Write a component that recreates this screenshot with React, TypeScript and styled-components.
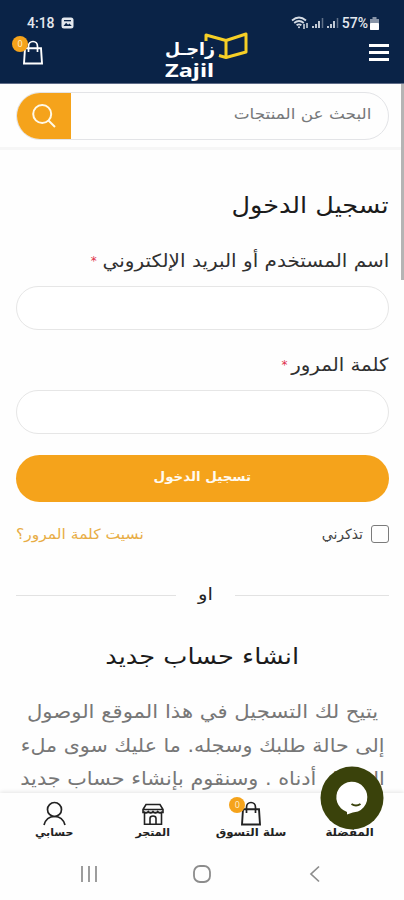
import React from "react";
import styled, { createGlobalStyle } from "styled-components";

const GlobalStyle = createGlobalStyle`
  * { box-sizing: border-box; }
  html, body { margin: 0; padding: 0; background: #fff; }
  body { font-family: "DejaVu Sans", "Noto Sans", sans-serif; overflow: hidden; }
`;

const Screen = styled.div`
  position: relative;
  width: 404px;
  height: 900px;
  overflow: hidden;
  display: flex;
  flex-direction: column;
  background: #fefefe;
`;

const Header = styled.header`
  height: 84px;
  flex: none;
  background: #0a2347;
  border-bottom: 1px solid #5f6c88;
  color: #fff;
`;

const StatusBar = styled.div`
  display: flex;
  justify-content: space-between;
  align-items: center;
  height: 30px;
  padding: 16px 25px 0 27px;
  font: 500 14px/14px Roboto, sans-serif;
  color: #e4e8ee;
`;

const StatusGroup = styled.div<{ $gap: number }>`
  display: flex;
  align-items: center;
  gap: ${(p) => p.$gap}px;
`;

const TitleBar = styled.div`
  display: grid;
  grid-template-columns: 153px 84px 1fr;
  height: 53px;
  padding: 0 15px 0 12px;
`;

const BagSlot = styled.div<{ $top: number; $left: number }>`
  position: relative;
  width: max-content;
  height: 25px;
  margin: ${(p) => p.$top}px 0 0 ${(p) => p.$left}px;
  svg { display: block; }
`;

const Badge = styled.span<{ $left: number; $top: number }>`
  position: absolute;
  left: ${(p) => p.$left}px;
  top: ${(p) => p.$top}px;
  width: 16px;
  height: 16px;
  border-radius: 50%;
  background: #f5a31b;
  color: #fff0d2;
  font: 9px/16px "Open Sans", sans-serif;
  text-align: center;
`;

const Logo = styled.svg`
  display: block;
  margin-top: 1px;
`;

const MenuButton = styled.button`
  justify-self: end;
  width: 20px;
  height: 17px;
  margin-top: 14px;
  padding: 0;
  border: 0;
  background: none;
  display: flex;
  flex-direction: column;
  justify-content: space-between;
`;

const MenuLine = styled.span`
  height: 3px;
  width: 20px;
  background: #fff;
`;

const SearchRow = styled.div`
  flex: none;
  height: 66px;
  padding: 8px 15px 0 16px;
  border-bottom: 3px solid #f6f6f6;
`;

const SearchBox = styled.div`
  display: flex;
  height: 48px;
  border: 1px solid #e3e4e7;
  border-radius: 24px;
  overflow: hidden;
`;

const SearchButton = styled.button`
  width: 55px;
  height: 48px;
  margin: -1px 0 0 -1px;
  padding: 0 0 1px;
  border: 0;
  background: #f5a31b;
  display: flex;
  align-items: center;
  justify-content: center;
`;

const SearchHint = styled.div`
  flex: 1;
  text-align: right;
  padding: 9px 17px 0 0;
  color: #77797b;
  line-height: 24px;
`;

const Form = styled.main`
  flex: none;
  padding: 0 15px 0 16px;
  display: flex;
  flex-direction: column;
  direction: rtl;
`;

const Text = styled.span<{ $size: number; $stretch?: number; $origin?: string; $bold?: boolean }>`
  display: inline-block;
  white-space: nowrap;
  font-size: ${(p) => p.$size}px;
  font-weight: ${(p) => (p.$bold ? 700 : 400)};
  transform: scaleX(${(p) => p.$stretch ?? 1});
  transform-origin: ${(p) => p.$origin ?? "right"} center;
  direction: rtl;
`;

const Title = styled.h1`
  margin: 35px 0 0;
  height: 34px;
  line-height: 34px;
  font-weight: 400;
  color: #1b1b1b;
`;

const Label = styled.label<{ $top: number }>`
  margin-top: ${(p) => p.$top}px;
  height: 40px;
  line-height: 30px;
  display: flex;
  color: #303030;
`;

const Required = styled.span<{ $shift: number }>`
  color: #e0314c;
  font-size: 12px;
  margin-right: ${(p) => p.$shift}px;
`;

const Input = styled.input`
  display: block;
  width: 100%;
  height: 44px;
  margin: 0;
  border: 1.5px solid #e6e6e6;
  border-radius: 22px;
  background: #fff;
  outline: none;
`;

const Submit = styled.button`
  margin: 21px 0 0;
  height: 47px;
  border: 0;
  border-radius: 24px;
  background: #f5a31b;
  color: #fffaf0;
  padding: 0 0 5px;
  font-family: inherit;
`;

const Options = styled.div`
  display: flex;
  justify-content: space-between;
  height: 24px;
  margin-top: 20px;
  line-height: 24px;
`;

const Remember = styled.label`
  display: flex;
  gap: 8px;
  color: #444;
`;

const Check = styled.span`
  width: 18px;
  height: 18px;
  margin-top: 3px;
  border: 1.5px solid #7b7b7b;
  border-radius: 3px;
`;

const Forgot = styled.a`
  color: #e8ad45;
`;

const Divider = styled.div`
  display: grid;
  grid-template-columns: 154px 1fr 160px;
  align-items: center;
  margin-top: 33px;
  height: 30px;
  text-align: center;
  color: #222;
`;

const Rule = styled.span`
  height: 1px;
  background: #e2e2e2;
  margin-top: 3px;
`;

const Subtitle = styled.h2`
  margin: 30px 0 0;
  height: 34px;
  line-height: 34px;
  font-weight: 400;
  text-align: center;
  color: #1b1b1b;
`;

const Paragraph = styled.div`
  margin-top: 22px;
  display: flex;
  flex-direction: column;
  align-items: center;
  color: #777;
  line-height: 33.5px;
`;

const BottomBar = styled.nav`
  position: absolute;
  left: 0;
  right: 0;
  bottom: 0;
  height: 107px;
  background: #fefefe;
  box-shadow: 0 -1px 4px rgba(0, 0, 0, 0.1);
  color: #222;
`;

const Tabs = styled.div`
  display: grid;
  grid-template-columns: repeat(4, 98.5px);
  padding-left: 5px;
  height: 53px;
`;

const Tab = styled.div`
  display: flex;
  flex-direction: column;
  align-items: center;
  padding-top: 8px;
  line-height: 14px;
  svg { display: block; }
`;

const TabIcon = styled.div`
  position: relative;
  height: 25px;
`;

const SystemBar = styled.div`
  display: grid;
  grid-template-columns: repeat(3, 113px);
  justify-content: center;
  justify-items: center;
  height: 54px;
  padding-top: 18px;
`;

const ChatButton = styled.div`
  position: absolute;
  left: 320px;
  top: 766px;
  width: 64px;
  height: 64px;
`;

const ScrollThumb = styled.div`
  position: absolute;
  right: 0;
  top: 84px;
  width: 3px;
  height: 196px;
  background: #b4b4b4;
`;

const Bag = ({ color }: { color: string }) => (
  <svg width="20" height="25" viewBox="0 0 20 25" fill="none" stroke={color} strokeWidth="1.9">
    <path d="M2 8.2h16l1 15.3H1z" />
    <path d="M5.5 12V6.4C5.5 3.5 7.4 1.5 10 1.5s4.5 2 4.5 4.9V12" strokeWidth="1.7" />
  </svg>
);

const Signal = () => (
  <svg width="13" height="12" viewBox="0 0 13 12">
    <path d="M1 9v2M4 7v4M7 4v7" stroke="#d5dbe4" strokeWidth="1.8" />
    <path d="M10.5 1v10" stroke="#607088" strokeWidth="1.5" />
  </svg>
);

export default function App() {
  return (
    <Screen>
      <GlobalStyle />
      <Header>
        <StatusBar>
          <StatusGroup $gap={6}>
            <span>4:18</span>
            <svg width="13" height="12" viewBox="0 0 13 12">
              <rect x=".5" y=".5" width="12" height="11" rx="2.5" fill="#e4e8ee" />
              <path d="M2.5 9l2.6-3.2 2 2 1.3-1.3L10.8 9z" fill="#0a2347" />
              <rect x="3" y="3" width="7" height="1.3" fill="#0a2347" />
            </svg>
          </StatusGroup>
          <StatusGroup $gap={2}>
            <svg width="19" height="14" viewBox="0 0 19 14" fill="none" stroke="#d5dbe4" strokeWidth="1.8">
              <path d="M1 4.5Q8 -1.5 15 4.5M3.2 7Q8 3 12.8 7M5.6 9.3Q8 7.4 10.4 9.3" />
              <circle cx="8" cy="11.3" r="1" fill="#d5dbe4" stroke="none" />
              <path d="M13 8v5M16 7v5" strokeWidth="1.5" />
            </svg>
            <Signal />
            <Signal />
            <span>57%</span>
            <svg width="9" height="13" viewBox="0 0 9 13">
              <path d="M2.5 0h4v2H9v11H0V2h2.5z" fill="#8995a8" />
              <rect y="6" width="9" height="7" rx="1" fill="#fff" />
            </svg>
          </StatusGroup>
        </StatusBar>
        <TitleBar>
          <BagSlot $top={10} $left={11}>
            <Bag color="#fff" />
            <Badge $left={-11} $top={-4}>0</Badge>
          </BagSlot>
          <Logo width="84" height="50" viewBox="0 0 84 50">
            <g fill="none" stroke="#f6cf26" strokeWidth="3" strokeLinejoin="round">
              <path d="M41 10V4L61 9.5 81 3V21L61 26.5 54 24.5M61 9.5V26.5" />
            </g>
            <text x="50" y="24" textAnchor="end" textLength="50" lengthAdjust="spacingAndGlyphs" fill="#fff" fontFamily="DejaVu Sans" fontWeight="700" fontSize="17">زاجـل</text>
            <text x="0" y="45.5" textLength="49" lengthAdjust="spacingAndGlyphs" fill="#fff" fontFamily="Noto Sans" fontWeight="700" fontSize="17">Zajil</text>
          </Logo>
          <MenuButton aria-label="menu">
            <MenuLine /><MenuLine /><MenuLine />
          </MenuButton>
        </TitleBar>
      </Header>

      <SearchRow>
        <SearchBox>
          <SearchButton aria-label="search">
            <svg width="24" height="24" viewBox="0 0 24 24" fill="none" stroke="#fff9e8" strokeWidth="2">
              <circle cx="10.2" cy="10" r="9" />
              <path d="M16.5 16.5L23 23" />
            </svg>
          </SearchButton>
          <SearchHint><Text $size={15} $stretch={1.125}>البحث عن المنتجات</Text></SearchHint>
        </SearchBox>
      </SearchRow>

      <Form>
        <Title><Text $size={23} $stretch={1.11}>تسجيل الدخول</Text></Title>
        <Label $top={27}>
          <Text $size={18} $stretch={1.11}>اسم المستخدم أو البريد الإلكتروني</Text>
          <Required $shift={34}>*</Required>
        </Label>
        <Input />
        <Label $top={20}>
          <Text $size={18} $stretch={1.1}>كلمة المرور</Text>
          <Required $shift={13}>*</Required>
        </Label>
        <Input type="password" />
        <Submit><Text $size={13} $bold $stretch={1.03} $origin="center">تسجيل الدخول</Text></Submit>
        <Options>
          <Remember><Check /><Text $size={14}>تذكرني</Text></Remember>
          <Forgot><Text $size={14} $stretch={1.11} $origin="left">نسيت كلمة المرور؟</Text></Forgot>
        </Options>
        <Divider><Rule /><Text $size={17} $stretch={1.15} $origin="center">او</Text><Rule /></Divider>
        <Subtitle><Text $size={22} $stretch={1.165} $origin="center">انشاء حساب جديد</Text></Subtitle>
        <Paragraph>
          <Text $size={19} $stretch={1.115} $origin="center">يتيح لك التسجيل في هذا الموقع الوصول</Text>
          <Text $size={19} $stretch={1.085} $origin="center">إلى حالة طلبك وسجله. ما عليك سوى ملء</Text>
          <Text $size={19} $stretch={1.095} $origin="center">الحقول أدناه . وسنقوم بإنشاء حساب جديد</Text>
        </Paragraph>
      </Form>

      <BottomBar>
        <Tabs>
          <Tab>
            <TabIcon>
              <svg width="23" height="25" viewBox="0 0 23 25" fill="none" stroke="#222" strokeWidth="1.7">
                <circle cx="11.5" cy="8.5" r="7" />
                <path d="M1 24C2.5 18.5 6 15.5 11.5 15.5S20.5 18.5 22 24" />
              </svg>
            </TabIcon>
            <Text $size={11} $bold $origin="center">حسابي</Text>
          </Tab>
          <Tab>
            <TabIcon>
              <svg width="22" height="25" viewBox="0 0 22 25" fill="none" stroke="#222" strokeWidth="1.6">
                <path d="M4 3.5h14l3 5v3H1v-3zM1 8.5h20M2.5 12v11.2h17V12M8 23v-5.5q0-2.5 3-2.5t3 2.5V23" />
                <path d="M1.5 10.5q2.4 3 4.8 0q2.4 3 4.7 0q2.4 3 4.7 0q2.4 3 4.8 0" />
              </svg>
            </TabIcon>
            <Text $size={11} $bold $origin="center">المتجر</Text>
          </Tab>
          <Tab>
            <TabIcon>
              <Bag color="#222" />
              <Badge $left={-12} $top={-4}>0</Badge>
            </TabIcon>
            <Text $size={11} $bold $stretch={1.07} $origin="center">سلة التسوق</Text>
          </Tab>
          <Tab>
            <TabIcon />
            <Text $size={11} $bold $stretch={1.07} $origin="center">المفضلة</Text>
          </Tab>
        </Tabs>
        <SystemBar>
          <svg width="18" height="20" viewBox="0 0 18 20" stroke="#8c8c8c" strokeWidth="1.7">
            <path d="M2 2v16M9 2v16M16 2v16" />
          </svg>
          <svg width="20" height="20" viewBox="0 0 20 20" fill="none" stroke="#8c8c8c" strokeWidth="1.8">
            <rect x="2" y="2" width="16" height="16" rx="6" />
          </svg>
          <svg width="12" height="20" viewBox="0 0 12 20" fill="none" stroke="#8c8c8c" strokeWidth="1.7">
            <path d="M10 2.5L2 10l8 7.5" />
          </svg>
        </SystemBar>
      </BottomBar>

      <ChatButton>
        <svg width="64" height="64" viewBox="0 0 64 64">
          <circle cx="32" cy="32" r="31.5" fill="#3a420b" />
          <path d="M27 48.5V46A15.5 15.5 0 1 1 38 45.5Q33 46 27 48.5z" fill="#fff" />
          <path d="M31.5 38q4.5 3 9 0" stroke="#3a420b" strokeWidth="2" fill="none" />
        </svg>
      </ChatButton>
      <ScrollThumb />
    </Screen>
  );
}
